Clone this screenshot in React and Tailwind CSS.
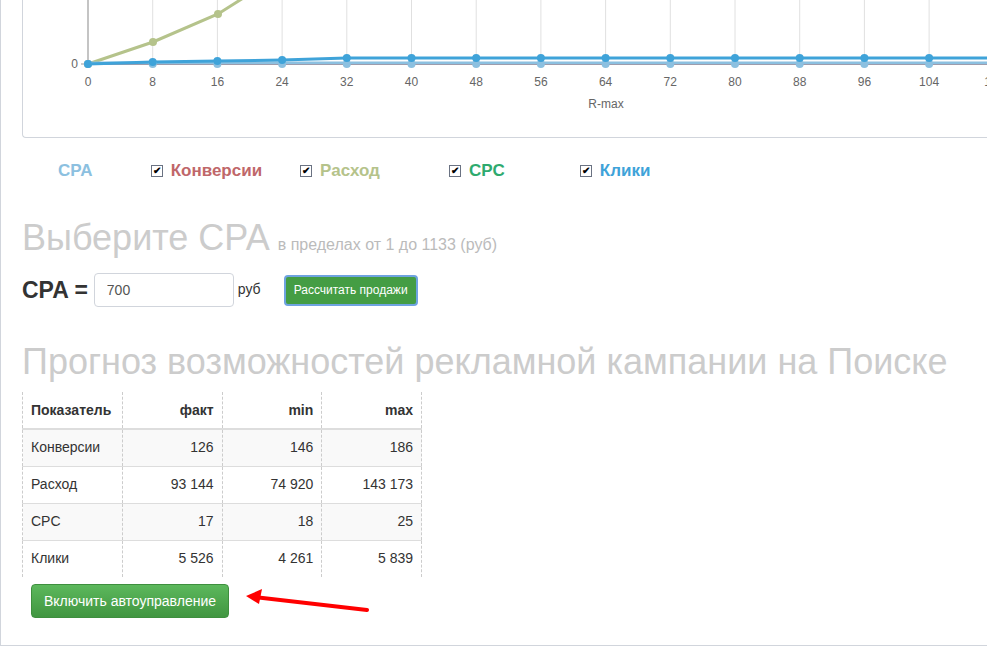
const xs = Array.from({ length: 15 }, (_, i) => 65 + i * 64.7);
const yZero = 64;

function Chart() {
  const ras = [[65, 64], [130, 42], [195, 14], [225, -5]];
  const click = [0, 2, 3, 4, 6, 6, 6, 6, 6, 6, 6, 6, 6, 6, 6];
  return (
    <svg width="966" height="137" className="block">
      {xs.map((x, i) => (
        <g key={i}>
          <line x1={x} y1="0" x2={x} y2={yZero} stroke="#e0e0e0" />
          <text x={x} y="86" fontSize="12" fill="#666" textAnchor="middle" fontFamily="Liberation Sans, Arial, sans-serif">{i * 8}</text>
        </g>
      ))}
      <line x1="65" y1="0" x2="65" y2={yZero} stroke="#999" />
      <line x1="58" y1={yZero} x2="966" y2={yZero} stroke="#999" />
      <text x="55" y="68" fontSize="12" fill="#666" textAnchor="end" fontFamily="Liberation Sans, Arial, sans-serif">0</text>
      <text x="583" y="108" fontSize="12" fill="#666" textAnchor="middle" fontFamily="Liberation Sans, Arial, sans-serif">R-max</text>
      <polyline points={ras.map((p) => p.join(',')).join(' ')} fill="none" stroke="#b5c38b" strokeWidth="3" />
      {ras.slice(0, 3).map(([x, y], i) => <circle key={i} cx={x} cy={y} r="4" fill="#b5c38b" />)}
      <polyline points={xs.map((x) => `${x},64`).join(' ')} fill="none" stroke="#b07a7a" strokeWidth="2" />
      <polyline points={xs.map((x) => `${x},63`).join(' ')} fill="none" stroke="#8cc0e0" strokeWidth="3" />
      <polyline points={xs.map((x, i) => `${x},${64 - click[i]}`).join(' ')} fill="none" stroke="#3fa3d9" strokeWidth="3" />
      {xs.map((x, i) => (
        <g key={i}>
          <circle cx={x} cy="64" r="4" fill="#8cc0e0" />
          <circle cx={x} cy={64 - click[i]} r="4" fill="#3fa3d9" />
        </g>
      ))}
    </svg>
  );
}

function Check() {
  return (
    <span className="inline-flex items-center justify-center w-[12px] h-[12px] border border-gray-500 bg-white text-[10px] leading-none text-black mr-2">✔</span>
  );
}

const rows = [
  ['Конверсии', '126', '146', '186'],
  ['Расход', '93 144', '74 920', '143 173'],
  ['CPC', '17', '18', '25'],
  ['Клики', '5 526', '4 261', '5 839'],
];

export default function App() {
  const font = { fontFamily: '"Liberation Sans", Arial, sans-serif' };
  return (
    <div className="w-[987px] h-[648px] overflow-hidden bg-white" style={font}>
      <div className="h-[646px] border-l border-b border-gray-300 relative">
        <div className="ml-[21px] w-[980px] h-[138px] border-l border-b border-gray-300 rounded-bl">
          <Chart />
        </div>
        <div className="flex items-center h-[65px] text-[17px] font-bold">
          <span className="ml-[57px] text-[#8cc0e0]">CPA</span>
          <span className="ml-[58px] flex items-center text-[#c0676a]"><Check />Конверсии</span>
          <span className="ml-[38px] flex items-center text-[#b5c38b]"><Check />Расход</span>
          <span className="ml-[69px] flex items-center text-[#2eaa6e]"><Check />CPC</span>
          <span className="ml-[75px] flex items-center text-[#3fa3d9]"><Check />Клики</span>
        </div>
        <div className="pl-[21px]">
          <div className="flex items-baseline mt-[17px] h-[40px]">
            <span className="text-[36px] text-[#ccc] leading-none">Выберите CPA</span>
            <span className="ml-2 text-[16px] text-[#bbb]">в пределах от 1 до 1133 (руб)</span>
          </div>
          <div className="flex items-center mt-[13px] h-[34px]">
            <span className="text-[23px] font-bold text-[#333]">CPA =</span>
            <input defaultValue="700" className="ml-[6px] w-[140px] h-[34px] border border-gray-300 rounded px-3 text-[14px] text-[#555]" />
            <span className="ml-[4px] text-[14px] text-[#333] self-start mt-[6px]">руб</span>
            <button className="ml-[23px] h-[31px] px-[8px] rounded bg-[#449d44] border-2 border-[#6fa3e0] text-white text-[12px]">Рассчитать продажи</button>
          </div>
          <div className="mt-[37px] text-[36px] text-[#ccc] leading-none h-[48px]">Прогноз возможностей рекламной кампании на Поиске</div>
          <table className="w-[400px] text-[14px] text-[#333] border-collapse">
            <thead>
              <tr className="h-[37px] border-b-2 border-[#ddd]">
                {['Показатель', 'факт', 'min', 'max'].map((h, i) => (
                  <th key={h} className={`w-[100px] px-2 font-bold border-x border-dashed border-[#ccc] ${i ? 'text-right' : 'text-left'}`}>{h}</th>
                ))}
              </tr>
            </thead>
            <tbody>
              {rows.map((r, ri) => (
                <tr key={ri} className={`h-[37px] border-t border-[#ddd] ${ri % 2 === 0 ? 'bg-[#f9f9f9]' : ''}`}>
                  {r.map((c, i) => (
                    <td key={i} className={`px-2 border-x border-dashed border-[#ccc] ${i ? 'text-right' : 'text-left'}`}>{c}</td>
                  ))}
                </tr>
              ))}
            </tbody>
          </table>
          <div className="flex items-center mt-[7px]">
            <button className="ml-[9px] w-[198px] h-[34px] rounded bg-gradient-to-b from-[#5cb85c] to-[#419641] border border-[#3e8f3e] text-white text-[14px]">Включить автоуправление</button>
            <svg width="130" height="30" className="ml-[15px]">
              <line x1="10" y1="11" x2="123" y2="24" stroke="#f00" strokeWidth="4" strokeLinecap="round" />
              <polygon points="2,10 18,3 15,18" fill="#f00" />
            </svg>
          </div>
        </div>
      </div>
    </div>
  );
}
